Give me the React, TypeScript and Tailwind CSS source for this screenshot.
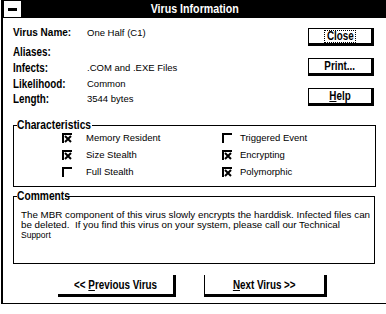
import React from "react";

const sans = "font-['Liberation_Sans',sans-serif]";

function N({ children, center }: { children: React.ReactNode; center?: boolean }) {
  return (
    <span
      className={`inline-block whitespace-nowrap scale-x-[0.82] ${center ? "origin-center" : "origin-left"}`}
    >
      {children}
    </span>
  );
}

function Check({ checked }: { checked: boolean }) {
  return (
    <div className="w-[10px] h-[10px] border-t-2 border-l-2 border-black shrink-0 flex items-center justify-center">
      {checked && (
        <svg width="8" height="8" viewBox="0 0 8 8" className="block">
          <path d="M1 1 L7 7 M7 1 L1 7" stroke="black" strokeWidth="2" />
        </svg>
      )}
    </div>
  );
}

function Row({ label, value, h }: { label: string; value: string; h: string }) {
  return (
    <div className={`${h} flex items-center`}>
      <div className={`w-[74px] font-bold text-[12px] leading-[16px] ${sans}`}>
        <N>{label}</N>
      </div>
      <div className={`text-[9.5px] leading-[16px] ${sans}`}>{value}</div>
    </div>
  );
}

export default function App() {
  return (
    <div className={`w-[386px] h-[314px] bg-white overflow-hidden text-black ${sans}`}>
      <div className="ml-[1px] h-[304px] border-l-2 border-b border-black flex flex-col">
        {/* title bar */}
        <div className="h-[18px] bg-black flex items-center shrink-0">
          <div className="ml-[1px] w-[17px] h-[16px] bg-white flex items-center justify-center">
            <div className="w-[9px] h-[3px] bg-black" />
          </div>
          <div className="flex-1 pr-[17px] text-center text-white font-bold text-[13px] leading-[18px]">
            <N center>Virus Information</N>
          </div>
        </div>

        {/* top section */}
        <div className="flex">
          <div className="flex-1 pl-[10px] pt-[7px]">
            <div className="h-[16px] flex items-center">
              <div className="w-[74px] font-bold text-[10px] leading-[16px]">Virus Name:</div>
              <div className="text-[9.5px] leading-[16px]">One Half (C1)</div>
            </div>
            <div className="h-[3px]" />
            <Row h="h-[16px]" label="Aliases:" value="" />
            <Row h="h-[16px]" label="Infects:" value=".COM and .EXE Files" />
            <Row h="h-[15px]" label="Likelihood:" value="Common" />
            <Row h="h-[16px]" label="Length:" value="3544 bytes" />
          </div>
          <div className="w-[66px] mr-[12px] mt-[10px] flex flex-col gap-[12px] font-bold text-[12px]">
            <div className="h-[18px] border border-black border-r-[3px] border-b-[3px] flex items-center justify-center">
              <span className="border border-dotted border-black w-[32px] h-[13px] flex items-center justify-center leading-[11px]">
                <N center>Close</N>
              </span>
            </div>
            <div className="h-[18px] border border-black border-r-[3px] border-b-[3px] flex items-center justify-center leading-[14px]">
              <N center>Print...</N>
            </div>
            <div className="h-[18px] border border-black border-r-[3px] border-b-[3px] flex items-center justify-center leading-[14px]">
              <N center>
                <span className="underline">H</span>elp
              </N>
            </div>
          </div>
        </div>

        {/* Characteristics */}
        <fieldset className="mt-[13.5px] ml-[10px] mr-[10px] border border-black pb-[5px]">
          <legend className="ml-[3px] w-[75px] font-bold text-[12.5px] leading-[9px]">
            <N>Characteristics</N>
          </legend>
          <div className="grid grid-cols-[160px_1fr] pl-[48px] text-[9.5px]">
            <div className="flex flex-col">
              <div className="h-[17px] flex items-center gap-[14px]"><Check checked /><span>Memory Resident</span></div>
              <div className="h-[17px] flex items-center gap-[14px]"><Check checked /><span>Size Stealth</span></div>
              <div className="h-[17px] flex items-center gap-[14px]"><Check checked={false} /><span>Full Stealth</span></div>
            </div>
            <div className="flex flex-col">
              <div className="h-[17px] flex items-center gap-[8px]"><Check checked={false} /><span>Triggered Event</span></div>
              <div className="h-[17px] flex items-center gap-[8px]"><Check checked /><span>Encrypting</span></div>
              <div className="h-[17px] flex items-center gap-[8px]"><Check checked /><span>Polymorphic</span></div>
            </div>
          </div>
        </fieldset>

        {/* Comments */}
        <fieldset className="mt-[5px] ml-[10px] mr-[11px] border border-black h-[72px]">
          <legend className="ml-[3px] w-[48px] font-bold text-[12.5px] leading-[9px]">
            <N>Comments</N>
          </legend>
          <div className="pl-[7px] pt-[9.5px] text-[9.8px] leading-[10px]">
            <div>The MBR component of this virus slowly encrypts the harddisk. Infected files can</div>
            <div>be deleted.&nbsp; If you find this virus on your system, please call our Technical</div>
            <div className="text-[8.5px]">Support</div>
          </div>
        </fieldset>

        {/* bottom buttons */}
        <div className="mt-[11.5px] flex font-bold text-[12px]">
          <div className="ml-[55px] w-[118px] h-[22px] border-r-[3px] border-b-[3px] border-black flex items-center justify-center">
            <N center>
              &lt;&lt; <span className="underline">P</span>revious Virus
            </N>
          </div>
          <div className="ml-[28px] w-[123px] h-[22px] border-l border-r-[3px] border-b-[3px] border-black flex items-center justify-center">
            <N center>
              <span className="underline">N</span>ext Virus &gt;&gt;
            </N>
          </div>
        </div>
      </div>
    </div>
  );
}
